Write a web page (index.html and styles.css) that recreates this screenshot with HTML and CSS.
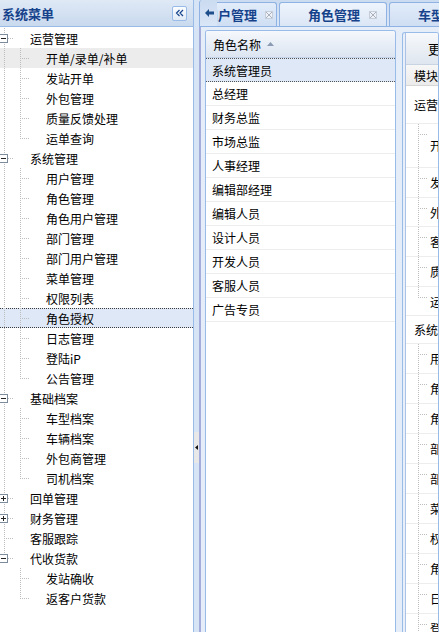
FILE: index.html
```html
<!DOCTYPE html>
<html lang="zh">
<head>
    <meta charset="UTF-8">
    <title>角色授权</title>
    <link rel="stylesheet" href="styles.css">
</head>
<body>
<div class="layout">
    <aside class="west">
        <div class="west-head">
            <span class="west-title">系统菜单</span>
            <span class="collapse-btn">
                <svg width="9" height="8" viewBox="0 0 9 8"><path d="M4.5 1L1.5 4l3 3M8 1L5 4l3 3" fill="none" stroke="#15428b" stroke-width="1.2"/></svg>
            </span>
        </div>
        <ul class="tree">
            <li class="node"><span class="ln tee"><svg class="tg" width="9" height="9" viewBox="0 0 9 9"><rect x=".5" y=".5" width="8" height="8" fill="#fff" stroke="#7d8c9c"/><path d="M2 4.5h5" stroke="#222"/></svg></span><span class="ico"></span>运营管理</li>
            <li class="node hover"><span class="ln pass"></span><span class="ln tee"></span><span class="ico"></span>开单/录单/补单</li>
            <li class="node"><span class="ln pass"></span><span class="ln tee"></span><span class="ico"></span>发站开单</li>
            <li class="node"><span class="ln pass"></span><span class="ln tee"></span><span class="ico"></span>外包管理</li>
            <li class="node"><span class="ln pass"></span><span class="ln tee"></span><span class="ico"></span>质量反馈处理</li>
            <li class="node"><span class="ln pass"></span><span class="ln end"></span><span class="ico"></span>运单查询</li>

            <li class="node"><span class="ln tee"><svg class="tg" width="9" height="9" viewBox="0 0 9 9"><rect x=".5" y=".5" width="8" height="8" fill="#fff" stroke="#7d8c9c"/><path d="M2 4.5h5" stroke="#222"/></svg></span><span class="ico"></span>系统管理</li>
            <li class="node"><span class="ln pass"></span><span class="ln tee"></span><span class="ico"></span>用户管理</li>
            <li class="node"><span class="ln pass"></span><span class="ln tee"></span><span class="ico"></span>角色管理</li>
            <li class="node"><span class="ln pass"></span><span class="ln tee"></span><span class="ico"></span>角色用户管理</li>
            <li class="node"><span class="ln pass"></span><span class="ln tee"></span><span class="ico"></span>部门管理</li>
            <li class="node"><span class="ln pass"></span><span class="ln tee"></span><span class="ico"></span>部门用户管理</li>
            <li class="node"><span class="ln pass"></span><span class="ln tee"></span><span class="ico"></span>菜单管理</li>
            <li class="node"><span class="ln pass"></span><span class="ln tee"></span><span class="ico"></span>权限列表</li>
            <li class="node sel"><span class="ln pass"></span><span class="ln tee"></span><span class="ico"></span>角色授权</li>
            <li class="node"><span class="ln pass"></span><span class="ln tee"></span><span class="ico"></span>日志管理</li>
            <li class="node"><span class="ln pass"></span><span class="ln tee"></span><span class="ico"></span>登陆iP</li>
            <li class="node"><span class="ln pass"></span><span class="ln end"></span><span class="ico"></span>公告管理</li>

            <li class="node"><span class="ln tee"><svg class="tg" width="9" height="9" viewBox="0 0 9 9"><rect x=".5" y=".5" width="8" height="8" fill="#fff" stroke="#7d8c9c"/><path d="M2 4.5h5" stroke="#222"/></svg></span><span class="ico"></span>基础档案</li>
            <li class="node"><span class="ln pass"></span><span class="ln tee"></span><span class="ico"></span>车型档案</li>
            <li class="node"><span class="ln pass"></span><span class="ln tee"></span><span class="ico"></span>车辆档案</li>
            <li class="node"><span class="ln pass"></span><span class="ln tee"></span><span class="ico"></span>外包商管理</li>
            <li class="node"><span class="ln pass"></span><span class="ln end"></span><span class="ico"></span>司机档案</li>

            <li class="node"><span class="ln tee"><svg class="tg" width="9" height="9" viewBox="0 0 9 9"><rect x=".5" y=".5" width="8" height="8" fill="#fff" stroke="#7d8c9c"/><path d="M2 4.5h5M4.5 2v5" stroke="#222"/></svg></span><span class="ico"></span>回单管理</li>
            <li class="node"><span class="ln tee"><svg class="tg" width="9" height="9" viewBox="0 0 9 9"><rect x=".5" y=".5" width="8" height="8" fill="#fff" stroke="#7d8c9c"/><path d="M2 4.5h5M4.5 2v5" stroke="#222"/></svg></span><span class="ico"></span>财务管理</li>
            <li class="node"><span class="ln tee"></span><span class="ico"></span>客服跟踪</li>
            <li class="node"><span class="ln end"><svg class="tg" width="9" height="9" viewBox="0 0 9 9"><rect x=".5" y=".5" width="8" height="8" fill="#fff" stroke="#7d8c9c"/><path d="M2 4.5h5" stroke="#222"/></svg></span><span class="ico"></span>代收货款</li>
            <li class="node"><span class="ln"></span><span class="ln tee"></span><span class="ico"></span>发站确收</li>
            <li class="node"><span class="ln"></span><span class="ln end"></span><span class="ico"></span>返客户货款</li>
        </ul>
    </aside>

    <div class="splitter">
        <span class="mini">
            <svg width="3" height="5" viewBox="0 0 3 5"><path d="M3 0v5L0 2.5z" fill="#111"/></svg>
        </span>
    </div>

    <main class="center">
        <div class="tabstrip">
            <span class="scroll-left">
                <svg width="9" height="8" viewBox="0 0 9 8"><path d="M0 4L4 0v2.5h5v3H4V8z" fill="#1d4f8c"/></svg>
            </span>
            <div class="tabs">
                <div class="tab first">用户管理<span class="tab-close"></span></div>
                <div class="tab active">角色管理<span class="tab-close"></span></div>
                <div class="tab">车型档案<span class="tab-close"></span></div>
            </div>
        </div>

        <div class="tab-body">
            <section class="grid">
                <div class="grid-head">
                    角色名称
                    <svg width="7" height="4" viewBox="0 0 7 4"><path d="M0 4L3.5 0 7 4z" fill="#8a9bb3"/></svg>
                </div>
                <div class="grid-row selected">系统管理员</div>
                <div class="grid-row">总经理</div>
                <div class="grid-row">财务总监</div>
                <div class="grid-row">市场总监</div>
                <div class="grid-row">人事经理</div>
                <div class="grid-row">编辑部经理</div>
                <div class="grid-row">编辑人员</div>
                <div class="grid-row">设计人员</div>
                <div class="grid-row">开发人员</div>
                <div class="grid-row">客服人员</div>
                <div class="grid-row">广告专员</div>
            </section>

            <section class="perm">
                <div class="perm-in">
                    <div class="perm-head">更新权限</div>
                    <div class="perm-cols">模块名称</div>
                    <div class="perm-row h38">运营管理</div>
                    <div class="perm-row h44"><span class="ln tee"></span>开单/录单/补单</div>
                    <div class="perm-row"><span class="ln tee"></span>发站开单</div>
                    <div class="perm-row h29"><span class="ln tee"></span>外包管理</div>
                    <div class="perm-row"><span class="ln tee"></span>客户管理</div>
                    <div class="perm-row"><span class="ln tee"></span>质量反馈处理</div>
                    <div class="perm-row h29"><span class="ln end"></span>运单查询</div>
                    <div class="perm-row h28">系统管理</div>
                    <div class="perm-row"><span class="ln tee"></span>用户管理</div>
                    <div class="perm-row"><span class="ln tee"></span>角色管理</div>
                    <div class="perm-row"><span class="ln tee"></span>角色用户管理</div>
                    <div class="perm-row"><span class="ln tee"></span>部门管理</div>
                    <div class="perm-row"><span class="ln tee"></span>部门用户管理</div>
                    <div class="perm-row"><span class="ln tee"></span>菜单管理</div>
                    <div class="perm-row"><span class="ln tee"></span>权限列表</div>
                    <div class="perm-row"><span class="ln tee"></span>角色授权</div>
                    <div class="perm-row"><span class="ln tee"></span>日志管理</div>
                    <div class="perm-row"><span class="ln tee"></span>登陆iP</div>
                </div>
            </section>
        </div>
    </main>
</div>
</body>
</html>
```

FILE: styles.css
```css
* {
    margin: 0;
    padding: 0;
    box-sizing: border-box;
}

body {
    font-family: "Noto Sans CJK SC", "Liberation Sans", sans-serif;
    font-size: 12px;
    color: #000;
    background: #dfe8f6;
    overflow: hidden;
}

.layout {
    display: flex;
    height: 632px;
}

/* left menu */
.west {
    width: 194px;
    flex: none;
    display: flex;
    flex-direction: column;
    background: #fff;
    border-right: 1px solid #99bbe8;
}

.west-head {
    height: 27px;
    flex: none;
    display: flex;
    align-items: center;
    justify-content: space-between;
    padding: 0 6px 0 2px;
    background: linear-gradient(#dfe9f6, #c9d9ee);
    border-bottom: 1px solid #99bbe8;
}

.west-title {
    font-size: 13px;
    font-weight: bold;
    color: #15428b;
}

.collapse-btn {
    width: 15px;
    height: 15px;
    display: flex;
    align-items: center;
    justify-content: center;
    border: 1px solid #99bbe8;
    border-radius: 2px;
    background: linear-gradient(#fbfdff, #e1eaf6);
}

.tree {
    list-style: none;
    padding-top: 1px;
}

.node {
    height: 20px;
    display: flex;
    align-items: center;
    white-space: nowrap;
}

.node.hover {
    background: #ececec;
}

.node.sel {
    background: #dfe8f6;
    border-top: 1px dotted #3c3c3c;
    border-bottom: 1px dotted #3c3c3c;
}

.ln {
    width: 16px;
    height: 20px;
    flex: none;
    display: flex;
    align-items: center;
}

.ln.pass {
    background: repeating-linear-gradient(to bottom, #bdbdbd 0 1px, transparent 1px 2px) 4px 0 / 1px 100% no-repeat;
}

.ln.tee {
    background:
        repeating-linear-gradient(to bottom, #bdbdbd 0 1px, transparent 1px 2px) 4px 0 / 1px 100% no-repeat,
        repeating-linear-gradient(to right, #bdbdbd 0 1px, transparent 1px 2px) 4px 10px / 9px 1px no-repeat;
}

.ln.end {
    background:
        repeating-linear-gradient(to bottom, #bdbdbd 0 1px, transparent 1px 2px) 4px 0 / 1px 10px no-repeat,
        repeating-linear-gradient(to right, #bdbdbd 0 1px, transparent 1px 2px) 4px 10px / 9px 1px no-repeat;
}

.tg {
    margin-left: -1px;
    display: block;
}

.ico {
    width: 14px;
    flex: none;
}

/* splitter */
.splitter {
    width: 5px;
    flex: none;
    background: #d6e4f5;
}

.mini {
    margin-top: 432px;
    width: 5px;
    height: 31px;
    display: flex;
    align-items: center;
    justify-content: center;
    background: #e8e8e8;
}

/* center tabs */
.center {
    flex: 1;
    min-width: 0;
    display: flex;
    flex-direction: column;
    overflow: hidden;
}

.tabstrip {
    height: 27px;
    flex: none;
    display: flex;
    background: linear-gradient(#cbdbf0, #d9e6f7);
    border-left: 1px solid #8db2e3;
    border-bottom: 1px solid #8db2e3;
    border-radius: 3px 0 0 0;
}

.scroll-left {
    width: 17px;
    flex: none;
    display: flex;
    align-items: center;
    padding: 0 0 1px 5px;
}

.tabs {
    flex: 1;
    min-width: 0;
    display: flex;
    align-items: flex-end;
    gap: 2px;
    overflow: hidden;
}

.tab {
    flex: none;
    height: 24px;
    display: flex;
    align-items: center;
    gap: 9px;
    padding: 0 9px 0 28px;
    border: 1px solid #8db2e3;
    border-bottom: none;
    border-radius: 3px 3px 0 0;
    background: linear-gradient(#e2ecfa, #cfdef3);
    font-size: 13px;
    font-weight: bold;
    color: #15428b;
    white-space: nowrap;
}

.tab.first {
    margin-left: -41px;
    gap: 8px;
    padding-right: 3px;
}

.tab.active {
    background: linear-gradient(#eef4fc, #dbe6f5);
}

.tab-close {
    width: 8px;
    height: 8px;
    flex: none;
    border: 1px solid #c6ceda;
    background:
        linear-gradient(45deg, transparent 44%, #a9b1bd 44% 56%, transparent 56%),
        linear-gradient(-45deg, transparent 44%, #a9b1bd 44% 56%, transparent 56%),
        #eef2f8;
}

.tab-body {
    flex: 1;
    min-height: 0;
    display: flex;
    gap: 6px;
    padding: 3px 0 0 4px;
    background: #e4edf8;
    border-left: 2px solid #a4acdc;
}

/* role grid */
.grid {
    width: 191px;
    flex: none;
    background: #fff;
    border: 1px solid #99bbe8;
    border-bottom: none;
    border-radius: 3px 3px 0 0;
    overflow: hidden;
}

.grid-head {
    height: 27px;
    display: flex;
    align-items: center;
    gap: 6px;
    padding-left: 7px;
    background: linear-gradient(#f5f8fc, #dce5f1);
    border-bottom: 1px solid #c5d3e6;
}

.grid-row {
    height: 24px;
    display: flex;
    align-items: center;
    padding-left: 6px;
    border-bottom: 1px solid #ededed;
    white-space: nowrap;
}

.grid-row.selected {
    background: #dfe8f6;
    border-top: 1px dotted #555;
    border-bottom: 1px dotted #555;
}

/* permission tree grid */
.perm {
    flex: 1;
    min-width: 0;
    margin-top: 2px;
    padding-left: 2px;
    display: flex;
    background: #e8eff9;
    border: 1px solid #99bbe8;
    border-bottom: none;
    border-radius: 3px 3px 0 0;
    overflow: hidden;
}

.perm-in {
    flex: 1;
    min-width: 0;
    background: #fff;
    border-left: 1px solid #a9c2e5;
}

.perm-head {
    height: 32px;
    display: flex;
    align-items: center;
    padding-left: 22px;
    background: linear-gradient(#f6f8fb, #dfe6ef);
    border-bottom: 1px solid #c9d4e2;
    font-size: 13px;
    white-space: nowrap;
}

.perm-cols {
    height: 21px;
    display: flex;
    align-items: center;
    padding-left: 8px;
    background: linear-gradient(#f7f7f7, #ebebeb);
    border-bottom: 1px solid #d6d6d6;
    white-space: nowrap;
}

.perm-row {
    height: 30px;
    display: flex;
    align-items: center;
    padding-left: 8px;
    border-bottom: 1px solid #ededed;
    white-space: nowrap;
}

.perm-row .ln {
    height: 100%;
}

.perm-row.h38 { height: 38px; }
.perm-row.h44 { height: 44px; }
.perm-row.h29 { height: 29px; }
.perm-row.h28 { height: 28px; }
```
